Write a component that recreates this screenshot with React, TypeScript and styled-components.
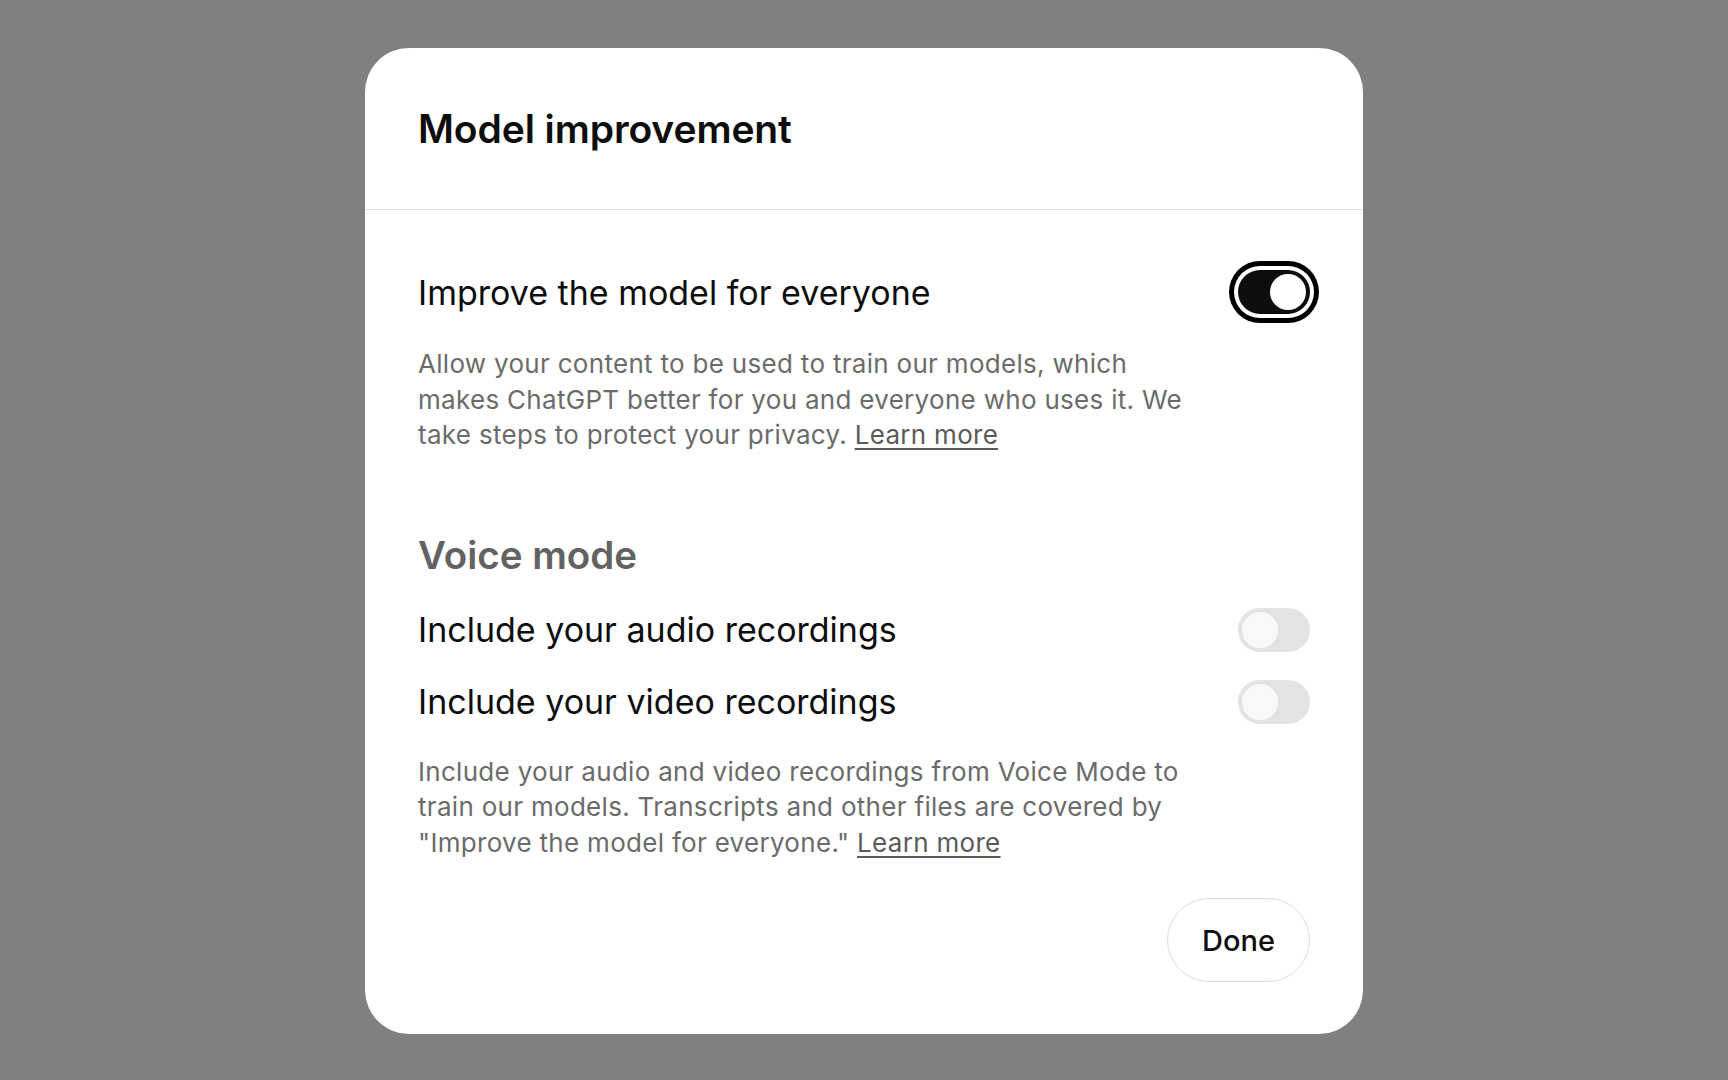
import styled, { createGlobalStyle } from 'styled-components';

const GlobalStyle = createGlobalStyle`
  * { box-sizing: border-box; }
  html, body {
    margin: 0;
    padding: 0;
    background: #808080;
    font-family: Inter, "Noto Sans", "Liberation Sans", sans-serif;
  }
`;

const Backdrop = styled.div`
  width: 100vw;
  height: 100vh;
  padding-top: 2px;
  display: flex;
  align-items: center;
  justify-content: center;
`;

const Dialog = styled.div`
  width: 998px;
  height: 986px;
  background: #ffffff;
  border-radius: 44px;
  display: flex;
  flex-direction: column;
  overflow: hidden;
`;

const Header = styled.div`
  height: 162px;
  padding: 0 53px;
  display: flex;
  align-items: center;
  border-bottom: 1px solid #e3e3e3;
`;

const Title = styled.h2`
  margin: 0;
  font-size: 39px;
  line-height: 48px;
  font-weight: 600;
  color: #0d0d0d;
  letter-spacing: -0.1px;
`;

const Body = styled.div`
  flex: 1;
  padding: 60px 53px 52px;
  display: flex;
  flex-direction: column;
`;

const Row = styled.div<{ $gap?: number }>`
  display: flex;
  align-items: center;
  justify-content: space-between;
  height: 44px;
  margin-top: ${p => p.$gap ?? 0}px;
`;

const Label = styled.span`
  font-size: 34px;
  color: #0d0d0d;
  font-weight: 400;
`;

const Description = styled.p<{ $gap: number }>`
  margin: ${p => p.$gap}px 0 0;
  font-size: 26px;
  line-height: 35.5px;
  color: #6b6b6b;
  letter-spacing: 0.3px;

  a {
    color: #5a5a5a;
    text-decoration: underline;
    text-underline-offset: 4px;
    text-decoration-thickness: 1.5px;
  }
`;

const SectionTitle = styled.h3`
  margin: 78px 0 0;
  font-size: 38.5px;
  line-height: 48px;
  font-weight: 600;
  color: #626262;
`;

const Track = styled.button<{ $on: boolean; $focused?: boolean }>`
  position: relative;
  width: 72px;
  height: 44px;
  border: none;
  padding: 0;
  border-radius: 22px;
  background: ${p => (p.$on ? '#0d0d0d' : '#e3e3e3')};
  box-shadow: ${p => (p.$focused ? '0 0 0 4px #ffffff, 0 0 0 9px #000000' : 'none')};
  cursor: pointer;
  flex-shrink: 0;
`;

const Knob = styled.span<{ $on: boolean }>`
  position: absolute;
  top: 4px;
  left: ${p => (p.$on ? '32px' : '4px')};
  width: 36px;
  height: 36px;
  border-radius: 50%;
  background: ${p => (p.$on ? '#ffffff' : '#f9f9f9')};
`;

const Footer = styled.div`
  margin-top: auto;
  display: flex;
  justify-content: flex-end;
`;

const DoneButton = styled.button`
  width: 143px;
  height: 84px;
  border-radius: 999px;
  border: 1.5px solid #dcdcdc;
  background: #ffffff;
  font-family: inherit;
  font-size: 29px;
  font-weight: 500;
  color: #0d0d0d;
  cursor: pointer;
`;

const Switch = ({ on, focused }: { on: boolean; focused?: boolean }) => (
  <Track $on={on} $focused={focused} role="switch" aria-checked={on}>
    <Knob $on={on} />
  </Track>
);

const App = () => {
  return (
    <>
      <GlobalStyle />
      <Backdrop>
        <Dialog>
          <Header>
            <Title>Model improvement</Title>
          </Header>
          <Body>
            <Row>
              <Label>Improve the model for everyone</Label>
              <Switch on focused />
            </Row>
            <Description $gap={32}>
              Allow your content to be used to train our models, which
              <br />
              makes ChatGPT better for you and everyone who uses it. We
              <br />
              take steps to protect your privacy. <a href="#">Learn more</a>
            </Description>

            <SectionTitle>Voice mode</SectionTitle>
            <Row $gap={29}>
              <Label>Include your audio recordings</Label>
              <Switch on={false} />
            </Row>
            <Row $gap={28}>
              <Label>Include your video recordings</Label>
              <Switch on={false} />
            </Row>
            <Description $gap={30}>
              Include your audio and video recordings from Voice Mode to
              <br />
              train our models. Transcripts and other files are covered by
              <br />
              "Improve the model for everyone." <a href="#">Learn more</a>
            </Description>

            <Footer>
              <DoneButton>Done</DoneButton>
            </Footer>
          </Body>
        </Dialog>
      </Backdrop>
    </>
  );
};

export default App;
